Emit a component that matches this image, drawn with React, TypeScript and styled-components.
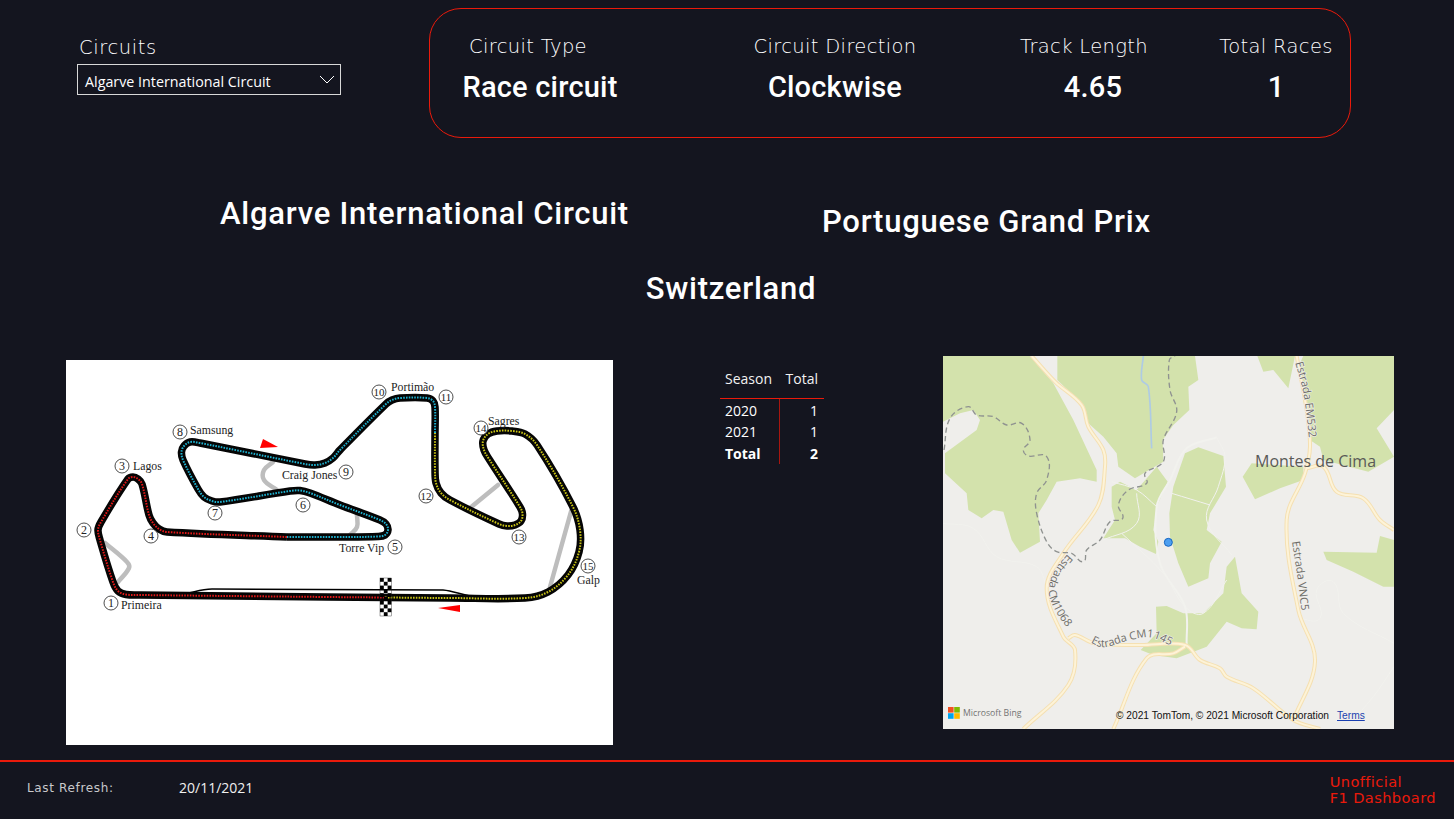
import styled, { createGlobalStyle } from "styled-components";

type Pt = [number, number];

const GlobalStyle = createGlobalStyle`
  html, body {
    margin: 0;
    padding: 0;
    background: #14151f;
  }
`;

const wideFont = `"DejaVu Sans", sans-serif`;
const dinFont = `Roboto, "Liberation Sans", sans-serif`;
const uiFont = `"Open Sans", "Noto Sans", sans-serif`;
const f1Red = "#ea1a0b";

// smooth line through the points, handles scaled to each segment so short bends stay tight
function smooth(p: Pt[]) {
  const tangent = (i: number): Pt => {
    const a = p[i - 1] || p[i];
    const c = p[i + 1] || p[i];
    const len = Math.hypot(c[0] - a[0], c[1] - a[1]) || 1;
    return [(c[0] - a[0]) / len, (c[1] - a[1]) / len];
  };
  let d = `M${p[0][0]} ${p[0][1]}`;
  for (let i = 0; i < p.length - 1; i++) {
    const b = p[i];
    const c = p[i + 1];
    const h = Math.hypot(c[0] - b[0], c[1] - b[1]) * 0.35;
    const t1 = tangent(i);
    const t2 = tangent(i + 1);
    d += ` C${b[0] + t1[0] * h} ${b[1] + t1[1] * h} ${c[0] - t2[0] * h} ${c[1] - t2[1] * h} ${c[0]} ${c[1]}`;
  }
  return d;
}

const Page = styled.div`
  width: 1454px;
  height: 819px;
  overflow: hidden;
  background: #14151f;
  color: #fff;
  display: flex;
  flex-direction: column;
`;

const Header = styled.header`
  display: flex;
  padding: 8px 0 0 77px;
  height: 130px;
`;

const Slicer = styled.div`
  width: 264px;
  margin-right: 88px;
  padding-top: 28px;
`;

const SlicerTitle = styled.div`
  font-family: ${wideFont};
  font-weight: 200;
  font-size: 19.5px;
  line-height: 24px;
  letter-spacing: 0.6px;
  color: #fff;
  padding-left: 2px;
  margin-bottom: 4px;
`;

const Select = styled.div`
  height: 29px;
  box-sizing: content-box;
  border: 1px solid #d8d8d8;
  display: flex;
  align-items: center;
  justify-content: space-between;
  padding: 0 5px 0 7px;
  font-family: ${uiFont};
  font-size: 14.3px;
`;

const SelectText = styled.span`
  padding-top: 3px;
`;

const KpiPanel = styled.section`
  width: 922px;
  height: 130px;
  box-sizing: border-box;
  border: 1px solid ${f1Red};
  border-radius: 32px;
  display: grid;
  grid-template-columns: 220px 370px 146px 1fr;
  padding-top: 24px;
`;

const Kpi = styled.div<{ $left?: number }>`
  text-align: center;
  padding-left: ${(p) => p.$left ?? 0}px;
`;

const KpiLabel = styled.div<{ $shift?: number }>`
  font-family: ${wideFont};
  font-weight: 200;
  font-size: 19.5px;
  line-height: 28px;
  letter-spacing: 0.35px;
  color: #fff;
  white-space: nowrap;
  padding-right: ${(p) => p.$shift ?? 0}px;
`;

const KpiValue = styled.div`
  font-family: ${dinFont};
  font-weight: 500;
  font-size: 29px;
  line-height: 40px;
  letter-spacing: 0.2px;
  margin-top: 6px;
`;

const TitleRow = styled.div`
  display: flex;
  gap: 193px;
  padding: 55px 0 0 220px;
  height: 57px;
`;

const Title = styled.h2<{ $drop?: number }>`
  margin: ${(p) => p.$drop ?? 0}px 0 0;
  font-family: ${dinFont};
  font-weight: 500;
  font-size: 31px;
  line-height: 42px;
  letter-spacing: 0.75px;
  white-space: nowrap;
`;

const CountryRow = styled.div`
  display: flex;
  justify-content: center;
  padding: 18px 0 0 8px;
  height: 50px;
`;

const Content = styled.div`
  display: flex;
  align-items: flex-start;
  padding: 0 0 0 66px;
  margin-top: 38px;
`;

const TrackCard = styled.div`
  width: 547px;
  height: 385px;
  margin-top: 4px;
  background: #fff;
  flex: none;
`;

const TrackSvg = styled.svg`
  display: block;
  width: 547px;
  height: 385px;
`;

const SeasonTable = styled.table`
  width: 104px;
  margin: 8px 119px 0 107px;
  flex: none;
  border-collapse: collapse;
  font-family: ${uiFont};
  font-size: 14px;
  line-height: 21.4px;

  th:first-child {
    width: 48px;
  }

  tbody tr:first-child td {
    padding-top: 1px;
  }
`;

const HeadCell = styled.th<{ $right?: boolean }>`
  font-weight: 400;
  height: 29px;
  padding: 0 6px 5px ${(p) => (p.$right ? 6 : 5)}px;
  text-align: ${(p) => (p.$right ? "right" : "left")};
  border-bottom: 1px solid ${f1Red};
  color: #f2f2f2;
`;

const Cell = styled.td<{ $right?: boolean; $bold?: boolean }>`
  padding: 0 6px 0 ${(p) => (p.$right ? 6 : 5)}px;
  text-align: ${(p) => (p.$right ? "right" : "left")};
  font-weight: ${(p) => (p.$bold ? 700 : 400)};
  border-left: ${(p) => (p.$right ? "1px solid #a8160f" : "none")};
`;

const MapCard = styled.div`
  position: relative;
  width: 451px;
  height: 373px;
  flex: none;
  background: #efeeeb;
  overflow: hidden;
`;

const MapSvg = styled.svg`
  display: block;
  width: 451px;
  height: 373px;
`;

const BingMark = styled.div`
  position: absolute;
  left: 5px;
  bottom: 10px;
  display: flex;
  align-items: center;
  gap: 3px;
  font-family: ${uiFont};
  font-size: 8.7px;
  line-height: 12px;
  color: #737373;
`;

const Attribution = styled.div`
  position: absolute;
  left: 173px;
  bottom: 7px;
  font-family: "Liberation Sans", Arial, sans-serif;
  font-size: 10.2px;
  line-height: 12px;
  color: #111;
  white-space: nowrap;
`;

const TermsLink = styled.span`
  color: #1a3fb0;
  text-decoration: underline;
  margin-left: 8px;
`;

const Footer = styled.footer`
  margin-top: auto;
  height: 59px;
  box-sizing: border-box;
  border-top: 2px solid ${f1Red};
  display: flex;
  align-items: center;
  padding: 0 18px 6px 27px;
`;

const RefreshLabel = styled.span`
  width: 152px;
  font-family: ${wideFont};
  font-size: 12px;
  letter-spacing: 0.65px;
  color: #c9c9cc;
`;

const RefreshDate = styled.span`
  font-family: ${uiFont};
  font-size: 14px;
  color: #f0f0f0;
`;

const Brand = styled.div`
  margin: 5px 0 0 auto;
  font-family: ${wideFont};
  font-size: 14.6px;
  line-height: 16px;
  letter-spacing: 0.4px;
  color: ${f1Red};
`;

const sectorYellow: Pt[] = [
  [385, 597.5], [450, 598], [525, 598], [548, 592], [568, 575], [579, 552], [580, 530], [573, 507], [537, 445],
  [525, 434], [512, 431], [497, 431], [488, 434], [483, 441], [484, 450], [489, 459], [520, 507], [522.5, 514],
  [521, 521], [515, 525], [507, 526], [499, 524], [450, 500], [441, 493], [436, 483], [435, 470], [435, 433],
];
const sectorBlue: Pt[] = [
  [435, 433], [435, 407], [433, 401], [427, 398], [400, 398], [392, 400], [386, 404], [340, 450], [333, 458], [325, 463],
  [315, 465], [305, 464], [200, 443], [190, 442], [184, 446], [181.5, 452], [183, 460], [198, 489], [204, 497], [212, 501],
  [220, 502], [290, 491], [300, 490.5], [310, 493], [340, 505], [380, 520], [386, 524], [388, 530], [385, 535], [378, 536.5], [340, 537], [287, 537],
];
const sectorRed: Pt[] = [
  [287, 537], [167, 532], [159, 529], [153, 523], [149, 515], [142, 484], [138, 479], [133, 477], [128, 479], [101, 522],
  [98, 530], [100, 540], [113, 582], [118, 591], [126, 594.5], [140, 595], [327, 597], [385, 597.5],
];

const runoffs: Pt[][] = [
  [[105, 543], [127, 562], [129, 568], [118, 582]],
  [[273, 462], [264, 470], [264, 480], [277, 490]],
  [[357, 515], [357, 527], [350, 535]],
  [[470, 508], [498, 485]],
  [[572, 508], [550, 587]],
];

const turns: [string, number, number][] = [
  ["1", 111, 603], ["2", 84, 530], ["3", 122, 466], ["4", 151, 536], ["5", 395, 547],
  ["6", 303, 505], ["7", 215, 513], ["8", 180, 432], ["9", 346, 472], ["10", 379, 392],
  ["11", 446, 397], ["12", 426, 496], ["13", 519, 537], ["14", 481, 428], ["15", 588, 566],
];

const corners: [string, number, number][] = [
  ["Primeira", 121, 609], ["Lagos", 133, 470], ["Samsung", 190, 434], ["Craig Jones", 282, 479],
  ["Torre Vip", 339, 552], ["Portimão", 391, 391], ["Sagres", 488, 425], ["Galp", 577, 584],
];

function TrackMap() {
  const flag = [];
  for (let row = 0; row < 10; row++) {
    for (let col = 0; col < 3; col++) {
      if ((row + col) % 2 === 0) {
        flag.push(<rect key={`${row}-${col}`} x={380 + col * 3.8} y={578 + row * 3.8} width="3.8" height="3.8" fill="#000" />);
      }
    }
  }
  const sectors: [Pt[], string][] = [
    [sectorYellow, "#c9c316"],
    [sectorBlue, "#1fb1cf"],
    [sectorRed, "#e01818"],
  ];
  return (
    <TrackSvg viewBox="66 360 547 385">
      {runoffs.map((r, i) => (
        <path key={i} d={smooth(r)} fill="none" stroke="#bdbdbd" strokeWidth="4.5" strokeLinecap="round" />
      ))}
      <path d="M175 595 C192 594 198 589 212 589 L443 590 C455 591 460 595 476 597" fill="none" stroke="#000" strokeWidth="1.6" />
      {sectors.map(([pts], i) => (
        <path key={i} d={smooth(pts)} fill="none" stroke="#050505" strokeWidth="7.5" strokeLinejoin="round" />
      ))}
      {sectors.map(([pts, colour], i) => (
        <path key={i} d={smooth(pts)} fill="none" stroke={colour} strokeWidth="2" strokeDasharray="1.6 1.2" />
      ))}
      {flag}
      <rect x="380" y="578" width="11.4" height="38" fill="none" stroke="#222" strokeWidth="0.4" />
      <polygon points="260,448 263,439 278,447" fill="#f00" />
      <polygon points="438,608 460,605 460,612" fill="#f00" />
      {turns.map(([n, x, y]) => (
        <g key={n}>
          <circle cx={x} cy={y} r="7" fill="#fff" stroke="#222" strokeWidth="0.8" />
          <text x={x} y={y + 4} textAnchor="middle" fontFamily="Liberation Serif" fontSize={n.length > 1 ? 11 : 12} fill="#222">{n}</text>
        </g>
      ))}
      {corners.map(([label, x, y]) => (
        <text key={label} x={x} y={y} fontFamily="Liberation Serif" fontSize="11.8" fill="#222">{label}</text>
      ))}
    </TrackSvg>
  );
}

const greens: string[] = [
  "9,18 270,18 340,100 400,210 470,360 470,395 420,385 350,395 320,450 295,490 300,575 240,608 215,570 190,485 160,480 125,505 85,480 80,430 15,370 15,310 110,240 120,210 100,180 60,190 9,215",
  "352,18 765,18 775,90 745,110 748,180 700,225 668,270 670,335 585,385 535,350 530,310 490,260 440,215 425,160 352,90",
  "515,410 540,395 590,420 650,350 683,395 650,470 640,540 655,575 648,612 600,590 555,565 490,565 525,510 515,470",
  "735,310 775,292 850,318 858,410 810,490 800,540 845,575 810,640 805,685 745,710 715,640 690,560 688,490 700,410",
  "885,620 905,730 955,785 950,838 905,835 860,815 800,890 710,925 640,915 602,900 650,850 648,770 680,768 730,790 790,790 850,730 860,650",
  "935,340 1090,350 1090,390 1020,415 945,448 908,380",
  "1090,18 1362,18 1362,180 1310,235 1362,320 1285,365 1150,330 1140,290 1110,270 1090,150 1075,50",
  "952,18 1065,18 1045,115 1000,60 970,65",
  "1320,558 1362,570 1362,710 1330,710 1240,665 1160,630 1150,605 1310,608",
];

const roads: Pt[][] = [
  [[275, 18], [345, 95], [425, 165], [445, 230], [490, 300], [495, 350], [475, 465], [370, 610], [320, 715], [370, 860], [405, 900], [385, 1005], [250, 1137]],
  [[385, 865], [405, 855], [465, 880], [600, 885], [735, 885], [780, 930], [840, 955], [860, 980], [940, 1015], [1060, 1110], [1140, 1137]],
  [[735, 890], [700, 910], [620, 925], [520, 1137]],
  [[1070, 18], [1100, 180], [1110, 290], [1095, 370], [1040, 510], [1075, 780], [1125, 935], [1060, 1110]],
  [[1100, 355], [1150, 350], [1190, 425], [1270, 445], [1320, 510], [1362, 540]],
];

const lanes: Pt[][] = [
  [[830, 262], [740, 295], [690, 390], [650, 470], [660, 640], [735, 770], [740, 885]],
  [[650, 470], [590, 420], [515, 395]],
  [[830, 262], [855, 320], [835, 410], [800, 510], [875, 615]],
  [[695, 430], [810, 465]],
  [[490, 570], [590, 520], [590, 430]],
  [[545, 550], [670, 670], [735, 770], [790, 790], [860, 690]],
  [[9, 520], [100, 535], [170, 620], [290, 650], [320, 710]],
  [[1075, 805], [1140, 805], [1130, 720], [1180, 695], [1210, 790], [1362, 880]],
  [[1362, 950], [1300, 1040], [1220, 1130]],
];

const trail: Pt[] = [
  [12, 300], [30, 205], [85, 170], [110, 195], [160, 200], [200, 225], [245, 220], [270, 270], [250, 300],
  [265, 318], [320, 320], [320, 390], [290, 430], [290, 490], [320, 575], [350, 605], [395, 610], [430, 635],
  [440, 600], [480, 570], [510, 515], [548, 505], [535, 465], [565, 420], [620, 400], [615, 370], [670, 335],
  [670, 270], [710, 185], [690, 120], [688, 30], [705, 18],
];

const roadLabels: [string, string, Pt[]][] = [
  ["em532", "Estrada EM532", [[1066, 38], [1090, 130], [1108, 268]]],
  ["vnc5", "Estrada VNC5", [[1056, 575], [1072, 680], [1084, 782]]],
  ["cm1068", "Estrada CM1068", [[382, 612], [345, 660], [326, 720], [345, 780], [384, 838]]],
  ["cm1145", "Estrada CM1145", [[452, 878], [490, 892], [560, 873], [630, 862], [695, 888]]],
];

function BingMap() {
  return (
    <MapCard>
      <MapSvg viewBox="9 18 1353 1119">
        <rect x="9" y="18" width="1353" height="1119" fill="#efeeeb" />
        {greens.map((g, i) => (
          <polygon key={i} points={g} fill="#d3e2ac" />
        ))}
        <path d={smooth([[610, 18], [605, 90], [625, 110], [635, 295]])} fill="none" stroke="#aecbe4" strokeWidth="5" />
        {lanes.map((l, i) => (
          <path key={i} d={smooth(l)} fill="none" stroke="#f2f2ee" strokeWidth={i === 0 ? 6 : 3} />
        ))}
        {roads.map((r, i) => (
          <path key={i} d={smooth(r)} fill="none" stroke="#f5e0b2" strokeWidth="12" strokeLinejoin="round" />
        ))}
        {roads.map((r, i) => (
          <path key={i} d={smooth(r)} fill="none" stroke="#fdf3d8" strokeWidth="6" strokeLinejoin="round" />
        ))}
        <path d={smooth(trail)} fill="none" stroke="#8f9290" strokeWidth="4" strokeDasharray="16 10" />
        {roadLabels.map(([id, , pts]) => (
          <path key={id} id={id} d={smooth(pts)} fill="none" />
        ))}
        {roadLabels.map(([id, label]) => (
          <text key={id} fontFamily="Open Sans" fontSize="33" fill="#6e6d68" stroke="#efeeeb" strokeWidth="4" paintOrder="stroke">
            <textPath href={`#${id}`}>{label}</textPath>
          </text>
        ))}
        <text x="945" y="350" fontFamily="Open Sans" fontSize="48" fill="#5a5a57">Montes de Cima</text>
        <circle cx="685" cy="577" r="12" fill="#4d9ff0" stroke="#1666c2" strokeWidth="3" />
      </MapSvg>
      <BingMark>
        <svg width="12" height="12" viewBox="0 0 12 12">
          <rect width="5.6" height="5.6" fill="#f25022" />
          <rect x="6.2" width="5.6" height="5.6" fill="#7fba00" />
          <rect y="6.2" width="5.6" height="5.6" fill="#00a4ef" />
          <rect x="6.2" y="6.2" width="5.6" height="5.6" fill="#ffb900" />
        </svg>
        Microsoft Bing
      </BingMark>
      <Attribution>
        © 2021 TomTom, © 2021 Microsoft Corporation
        <TermsLink>Terms</TermsLink>
      </Attribution>
    </MapCard>
  );
}

function App() {
  return (
    <>
      <GlobalStyle />
      <Page>
        <Header>
          <Slicer>
            <SlicerTitle>Circuits</SlicerTitle>
            <Select>
              <SelectText>Algarve International Circuit</SelectText>
              <svg width="16" height="9" viewBox="0 0 16 9">
                <path d="M1 1 L8 8 L15 1" fill="none" stroke="#fff" strokeWidth="1" />
              </svg>
            </Select>
          </Slicer>
          <KpiPanel>
            <Kpi>
              <KpiLabel $shift={24}>Circuit Type</KpiLabel>
              <KpiValue>Race circuit</KpiValue>
            </Kpi>
            <Kpi>
              <KpiLabel>Circuit Direction</KpiLabel>
              <KpiValue>Clockwise</KpiValue>
            </Kpi>
            <Kpi>
              <KpiLabel $shift={26}>Track Length</KpiLabel>
              <KpiValue>4.65</KpiValue>
            </Kpi>
            <Kpi $left={36}>
              <KpiLabel>Total Races</KpiLabel>
              <KpiValue>1</KpiValue>
            </Kpi>
          </KpiPanel>
        </Header>
        <TitleRow>
          <Title>Algarve International Circuit</Title>
          <Title $drop={8}>Portuguese Grand Prix</Title>
        </TitleRow>
        <CountryRow>
          <Title>Switzerland</Title>
        </CountryRow>
        <Content>
          <TrackCard>
            <TrackMap />
          </TrackCard>
          <SeasonTable>
            <thead>
              <tr>
                <HeadCell>Season</HeadCell>
                <HeadCell $right>Total</HeadCell>
              </tr>
            </thead>
            <tbody>
              <tr>
                <Cell>2020</Cell>
                <Cell $right>1</Cell>
              </tr>
              <tr>
                <Cell>2021</Cell>
                <Cell $right>1</Cell>
              </tr>
              <tr>
                <Cell $bold>Total</Cell>
                <Cell $right $bold>2</Cell>
              </tr>
            </tbody>
          </SeasonTable>
          <BingMap />
        </Content>
        <Footer>
          <RefreshLabel>Last Refresh:</RefreshLabel>
          <RefreshDate>20/11/2021</RefreshDate>
          <Brand>
            Unofficial
            <br />
            F1 Dashboard
          </Brand>
        </Footer>
      </Page>
    </>
  );
}

export default App;
